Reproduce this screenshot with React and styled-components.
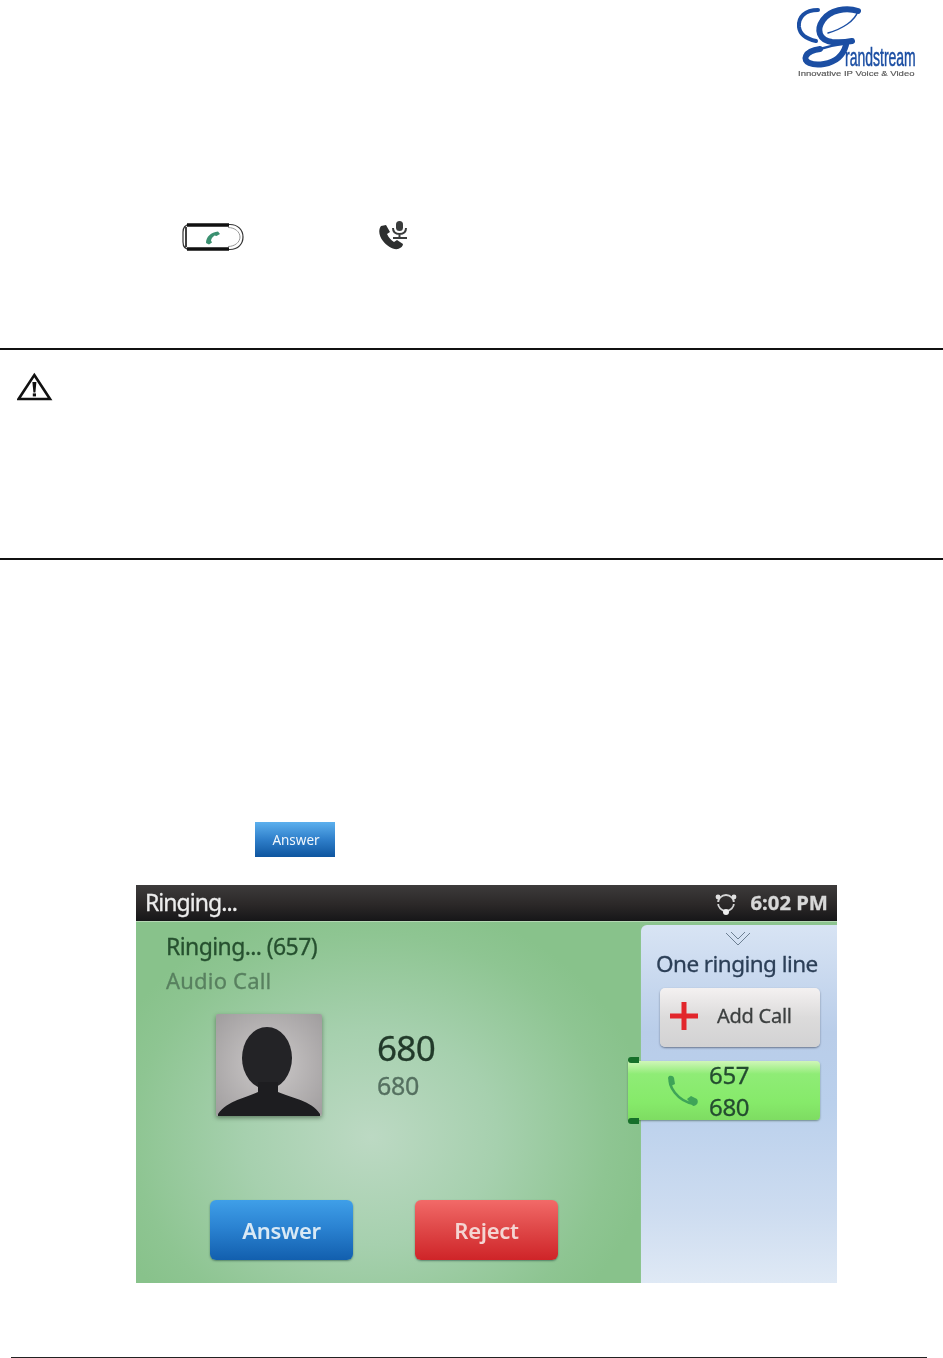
import React from 'react';
import styled, { createGlobalStyle, css } from 'styled-components';

const GlobalStyle = createGlobalStyle`
    html, body { margin: 0; padding: 0; background: #fff; }
    body { font-family: "Open Sans", "Liberation Sans", sans-serif; }
`;

// the phone screen is a scaled up photo, so its text is soft
const soft = css`
    filter: blur(0.7px);
    -webkit-text-stroke: 0.3px currentColor;
`;

const Page = styled.div`
    width: 943px;
    height: 1358px;
    overflow: hidden;
    display: flex;
    flex-direction: column;
    align-items: flex-start;
`;

const Header = styled.header`
    width: 100%;
    height: 90px;
    display: flex;
    justify-content: flex-end;
`;

const KeyRow = styled.div`
    margin-top: 133px;
    padding-left: 182px;
    height: 28px;
    display: flex;
    align-items: center;
    gap: 134px;
`;

const Rule = styled.hr`
    width: 100%;
    height: 2px;
    margin: ${p => p.$top || 0}px 0 0;
    border: 0;
    background: #111;
`;

const Notice = styled.div`
    height: 208px;
    box-sizing: border-box;
    padding: 22px 0 0 17px;
`;

const SmallAnswer = styled.div`
    margin: 262px 0 0 255px;
    width: 80px;
    height: 35px;
    box-sizing: border-box;
    padding-left: 2px;
    display: flex;
    align-items: center;
    justify-content: center;
    background: linear-gradient(#5cb0ee, #2f7fca 50%, #0e559f);
    color: #f2f7fc;
    font-size: 13.5px;
    font-family: "Noto Sans", sans-serif;
    span { filter: blur(0.3px); }
`;

const Screen = styled.div`
    margin: 28px 0 0 136px;
    width: 701px;
    height: 398px;
    display: flex;
    flex-direction: column;
    font-family: "Noto Sans", "Open Sans", sans-serif;
    background: #8cc48f;
`;

const StatusBar = styled.div`
    height: 36px;
    flex: none;
    display: flex;
    align-items: center;
    justify-content: space-between;
    padding: 0 9px;
    background: linear-gradient(#3d3b3b, #2b2828 55%, #161618);
    color: #ececec;
    border-bottom: 1px solid #b5d8b4;
`;

const StatusTitle = styled.span`
    font-size: 23px;
    letter-spacing: -0.95px;
    margin-top: -3px;
    ${soft}
`;

const StatusRight = styled.div`
    display: flex;
    align-items: center;
    gap: 13px;
`;

const Clock = styled.span`
    font-size: 20.3px;
    font-weight: 700;
    margin-top: -2px;
    color: #d8d8d8;
    ${soft}
`;

const Body = styled.div`
    flex: 1;
    display: flex;
    min-height: 0;
`;

const CallPane = styled.div`
    width: 504px;
    flex: none;
    box-sizing: border-box;
    padding: 7px 0 0 30px;
    background: radial-gradient(ellipse 280px 240px at 235px 215px, #bcd9c3 0%, #a6d0ae 45%, #8ec592 85%, #88c28b 100%);
    display: flex;
    flex-direction: column;
`;

const CallTitle = styled.div`
    font-size: 23px;
    line-height: 34px;
    letter-spacing: -0.6px;
    color: #26502f;
    ${soft}
`;

const CallType = styled.div`
    font-size: 22px;
    line-height: 34px;
    letter-spacing: 0.2px;
    color: #58805f;
    ${soft}
`;

const Contact = styled.div`
    margin: 17px 0 0 50px;
    display: flex;
    gap: 55px;
`;

const Avatar = styled.div`
    width: 106px;
    height: 102px;
    background: radial-gradient(circle at 50% 50%, #cdcaca, #a09d9e);
    box-shadow: 0 2px 4px rgba(40, 60, 40, .55);
    border-radius: 2px;
    overflow: hidden;
    display: flex;
    filter: blur(0.6px);
`;

const ContactText = styled.div`
    padding-top: 13px;
    display: flex;
    flex-direction: column;
`;

const ContactName = styled.div`
    font-size: 35px;
    line-height: 42px;
    letter-spacing: -0.7px;
    color: #223a2a;
    ${soft}
`;

const ContactNumber = styled.div`
    font-size: 25px;
    line-height: 32px;
    letter-spacing: -0.3px;
    color: #557060;
    ${soft}
`;

const Actions = styled.div`
    margin: 84px 0 0 44px;
    display: flex;
    gap: 62px;
`;

const ActionButton = styled.div`
    width: 143px;
    height: 60px;
    border-radius: 6px;
    display: flex;
    align-items: center;
    justify-content: center;
    font-size: 22px;
    font-weight: 600;
    letter-spacing: -0.3px;
    color: ${p => p.$reject ? '#f4d5d2' : '#d9e9f5'};
    background: ${p => p.$reject
        ? 'linear-gradient(#f26a68, #e04a4a 45%, #cf2428)'
        : 'linear-gradient(#3f9fe8, #2b83d2 45%, #125fae)'};
    box-shadow: 0 1px 2px rgba(30, 70, 60, .55);
    span { filter: blur(0.7px); }
`;

const SidePane = styled.div`
    flex: 1;
    margin: 3px 0 0 1px;
    border-radius: 6px 0 0 0;
    background: linear-gradient(#d8e4f4, #b9cde9 30%, #bad0ec 50%, #cddcf0 80%, #dfe9f5);
    display: flex;
    flex-direction: column;
    align-items: flex-start;
    position: relative;
`;

const Chevron = styled.div`
    align-self: center;
    margin: 6px 0 0 -3px;
    height: 16px;
    display: flex;
`;

const SideTitle = styled.div`
    margin: 1px 0 0 15px;
    font-size: 22.5px;
    line-height: 32px;
    letter-spacing: -0.55px;
    color: #2c3f57;
    white-space: nowrap;
    ${soft}
`;

const AddCall = styled.div`
    margin: 8px 0 0 19px;
    width: 160px;
    height: 59px;
    box-sizing: border-box;
    padding: 0 0 4px 8px;
    gap: 17px;
    border-radius: 5px;
    display: flex;
    align-items: center;
    background: linear-gradient(#f4f1f1, #dcdbdb 50%, #d2d2d3);
    box-shadow: 0 1px 2px rgba(50, 60, 80, .6);
    color: #3c3f3f;
    font-size: 20px;
    letter-spacing: -0.25px;
    span { ${soft} }
`;

const LineTab = styled.div`
    position: relative;
    margin: 14px 0 0 -13px;
    width: 192px;
    height: 59px;
    box-sizing: border-box;
    padding-left: 37px;
    display: flex;
    align-items: center;
    gap: 10px;
    background: linear-gradient(#d0f6b8, #8fec76 22%, #86ea6a 70%, #7edc62);
    border-radius: 0 4px 4px 0;
    box-shadow: 0 1px 2px rgba(50, 80, 60, .55);
    &::before, &::after {
        content: "";
        position: absolute;
        left: 0;
        width: 11px;
        height: 6px;
        background: #17702a;
        border-radius: 3px 0 0 3px;
    }
    &::before { top: -4px; }
    &::after { bottom: -4px; }
`;

const LineNumbers = styled.div`
    display: flex;
    flex-direction: column;
    font-size: 24px;
    line-height: 32px;
    letter-spacing: -0.3px;
    color: #244c30;
    ${soft}
`;

const FooterRule = styled.hr`
    margin: 74px 0 0 11px;
    width: 916px;
    height: 1px;
    border: 0;
    background: #222;
`;

const LogoSvg = styled.svg`
    filter: blur(0.5px);
`;

const LogoWord = styled.text`
    font-family: "Liberation Sans", sans-serif;
`;

const SoftIcon = styled.svg`
    filter: blur(0.5px);
    margin-top: -3px;
`;

function Logo() {
    return (
        <LogoSvg width="173" height="90" viewBox="0 0 173 90">
            <g fill="none" stroke="#1b4ea3" strokeLinecap="round">
                <path d="M48 10 C35 10 28 17 29 27 C30 35 37 39 46 41" strokeWidth="4" />
                <path d="M88 11 C76 7 60 10 53 20 C46 30 49 40 62 42 C72 43 77 42 82 41" strokeWidth="6" />
                <path d="M88 11 C85 21 72 29 58 33" strokeWidth="1.4" />
                <path d="M76 45 C73 56 66 62 54 64 C42 66 33 62 36 56 C38 52 43 50 50 49" strokeWidth="6" />
                <path d="M50 49 C60 46 70 44 78 43" strokeWidth="2.4" />
            </g>
            <LogoWord transform="translate(75 66) scale(0.56 1)" fontSize="25" fill="#1b4ea3" stroke="#1b4ea3" strokeWidth="0.5">randstream</LogoWord>
            <LogoWord transform="translate(28 76) scale(1.19 1)" fontSize="8" fill="#555" stroke="#555" strokeWidth="0.15">Innovative IP Voice &amp; Video</LogoWord>
        </LogoSvg>
    );
}

function PhoneKey() {
    return (
        <svg width="62" height="28" viewBox="0 0 62 28">
            <path d="M8 1.5 H48 C56 1.5 61 7 61 14 C61 21 56 26.5 48 26.5 H8 C3 26.5 1 23 1 19 V9 C1 5 3 1.5 8 1.5 Z" fill="#fff" stroke="#333" strokeWidth="1.2" />
            <path d="M46 4.5 C53 4.5 58 9 58 14 C58 19 53 23.5 46 23.5" fill="none" stroke="#999" strokeWidth="1" />
            <path d="M5 2 H47 M5 26 H47" stroke="#111" strokeWidth="3.4" />
            <path d="M4 4 V24" stroke="#111" strokeWidth="1.6" />
            <path d="M24 20 C24 14 29 9 36 8.5 L38 11 L34.5 13 L32.5 12.5 C30.5 14 29.5 15.5 29 17.5 L30 19.5 L27 21.5 Z" fill="#3a9070" />
        </svg>
    );
}

function MicPhone() {
    return (
        <SoftIcon width="30" height="30" viewBox="0 0 30 30">
            <path d="M3 5 C0 9 1 15 5 20 C9 25 15 29 20 28 C23 27 25 25 25 23 L19 19 L16 21 C13 19 11 17 9 13 L12 11 L8 4 Z" fill="#2d2f2f" />
            <rect x="18" y="0" width="7" height="10" rx="3.5" fill="#3a3c3c" />
            <path d="M15 7 C15 11 17 13 21.5 13 C26 13 28 11 28 7 M21.5 13 V16 M15 17 H29" fill="none" stroke="#3a3c3c" strokeWidth="2" />
        </SoftIcon>
    );
}

function Warning() {
    return (
        <svg width="36" height="30" viewBox="0 0 36 30">
            <path d="M17.3 3 L33 27 H1.6 Z" fill="#fff" stroke="#111" strokeWidth="2.6" />
            <path d="M15.4 10 H19.4 L18.4 20.5 H16.4 Z" fill="#111" />
            <rect x="15.8" y="21.4" width="3.2" height="3" fill="#111" />
        </svg>
    );
}

function SyncIcon() {
    return (
        <svg width="24" height="24" viewBox="0 0 24 24">
            <circle cx="12" cy="12" r="8" fill="none" stroke="#d5d5d5" strokeWidth="1.8" />
            <circle cx="12" cy="21" r="3" fill="#eee" />
            <circle cx="4" cy="6" r="2.4" fill="#e0e0e0" />
            <circle cx="20" cy="6" r="2.4" fill="#e0e0e0" />
            <path d="M2 12 H6 M18 12 H22" stroke="#2b2828" strokeWidth="2" />
        </svg>
    );
}

function Silhouette() {
    return (
        <svg width="106" height="102" viewBox="0 0 106 102">
            <ellipse cx="51" cy="44" rx="25" ry="31" fill="#232326" />
            <path d="M42 68 H62 V78 C75 84 95 86 104 100 V102 H2 V100 C12 86 30 84 42 78 Z" fill="#1d1d20" />
        </svg>
    );
}

function App() {
    return (
        <Page>
            <GlobalStyle />
            <Header><Logo /></Header>
            <KeyRow>
                <PhoneKey />
                <MicPhone />
            </KeyRow>
            <Rule $top={97} />
            <Notice><Warning /></Notice>
            <Rule />
            <SmallAnswer><span>Answer</span></SmallAnswer>
            <Screen>
                <StatusBar>
                    <StatusTitle>Ringing...</StatusTitle>
                    <StatusRight>
                        <SyncIcon />
                        <Clock>6:02 PM</Clock>
                    </StatusRight>
                </StatusBar>
                <Body>
                    <CallPane>
                        <CallTitle>Ringing... (657)</CallTitle>
                        <CallType>Audio Call</CallType>
                        <Contact>
                            <Avatar><Silhouette /></Avatar>
                            <ContactText>
                                <ContactName>680</ContactName>
                                <ContactNumber>680</ContactNumber>
                            </ContactText>
                        </Contact>
                        <Actions>
                            <ActionButton><span>Answer</span></ActionButton>
                            <ActionButton $reject><span>Reject</span></ActionButton>
                        </Actions>
                    </CallPane>
                    <SidePane>
                        <Chevron>
                            <svg width="26" height="16" viewBox="0 0 26 16">
                                <path d="M1 2 L13 14 L25 2 M6 1 L13 8 L20 1" fill="none" stroke="#6d7f92" strokeWidth="1" />
                            </svg>
                        </Chevron>
                        <SideTitle>One ringing line</SideTitle>
                        <AddCall>
                            <svg width="32" height="32" viewBox="0 0 32 32">
                                <path d="M16 2 V30 M2 16 H30" stroke="#e2262c" strokeWidth="5" />
                            </svg>
                            <span>Add Call</span>
                        </AddCall>
                        <LineTab>
                            <svg width="34" height="34" viewBox="0 0 34 34">
                                <path d="M5 3 C3 12 12 27 29 30" fill="none" stroke="#3fa458" strokeWidth="2.6" strokeLinecap="round" />
                                <path d="M3 4 C4 1 8 1 9 4 L10 10 L6 12 Z" fill="#3fa458" />
                                <path d="M22 25 L26 22 L32 25 C34 28 32 32 28 32 Z" fill="#3fa458" />
                            </svg>
                            <LineNumbers>
                                <span>657</span>
                                <span>680</span>
                            </LineNumbers>
                        </LineTab>
                    </SidePane>
                </Body>
            </Screen>
            <FooterRule />
        </Page>
    );
}

export default App;
